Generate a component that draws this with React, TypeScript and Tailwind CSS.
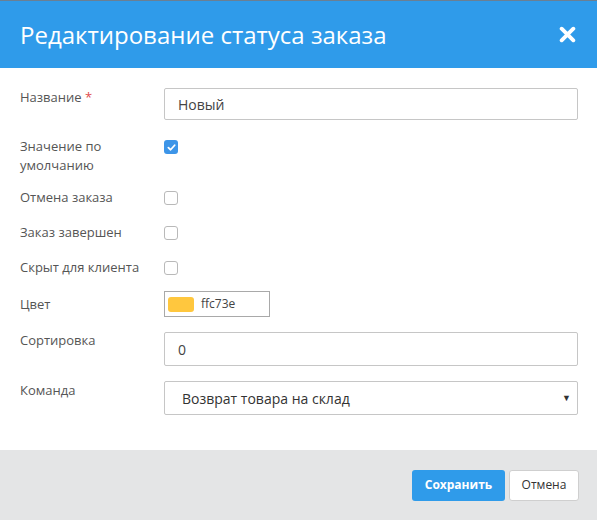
import React from 'react';

const font = { fontFamily: '"Open Sans", "Liberation Sans", sans-serif' };

const Check: React.FC<{ on?: boolean }> = ({ on }) =>
  on ? (
    <span className="flex h-[14px] w-[14px] items-center justify-center rounded-[3px] bg-[#3d95e8]">
      <svg viewBox="0 0 10 10" className="h-[9px] w-[9px]">
        <path d="M1.5 5.2 L4 7.5 L8.5 2.5" fill="none" stroke="#fff" strokeWidth="2" strokeLinecap="round" strokeLinejoin="round" />
      </svg>
    </span>
  ) : (
    <span className="block h-[14px] w-[14px] rounded-[3px] border border-[#b9b9b9] bg-white" />
  );

const Label: React.FC<{ children: React.ReactNode }> = ({ children }) => (
  <div className="w-[144px] shrink-0 text-[13px] leading-[19px] text-[#555]">{children}</div>
);

export default function App() {
  return (
    <div className="flex h-[520px] w-[597px] flex-col bg-white" style={font}>
      <div className="h-px bg-[#6a7f93]" />
      <div className="flex h-[67px] items-center justify-between bg-[#2f9bea] pl-[20px] pr-[21px]">
        <h1 className="text-[24px] leading-none text-white">Редактирование статуса заказа</h1>
        <svg viewBox="0 0 16 16" className="h-[17px] w-[17px]">
          <path d="M2.5 2.5 L13.5 13.5 M13.5 2.5 L2.5 13.5" stroke="#fff" strokeWidth="3.6" strokeLinecap="round" />
        </svg>
      </div>

      <div className="flex-1 pl-[20px] pr-[19px] pt-[20px]">
        <div className="flex">
          <Label>
            Название <span className="text-[#e04b4b]">*</span>
          </Label>
          <div className="flex h-[32px] flex-1 items-center rounded-[2px] border border-[#c6c6c6] px-[13px] text-[14px] text-[#444]">
            Новый
          </div>
        </div>

        <div className="mt-[17px] flex">
          <Label>Значение по<br />умолчанию</Label>
          <div className="pt-[3px]"><Check on /></div>
        </div>

        <div className="mt-[13px] flex">
          <Label>Отмена заказа</Label>
          <div className="pt-[3px]"><Check /></div>
        </div>

        <div className="mt-[16px] flex">
          <Label>Заказ завершен</Label>
          <div className="pt-[3px]"><Check /></div>
        </div>

        <div className="mt-[16px] flex">
          <Label>Скрыт для клиента</Label>
          <div className="pt-[3px]"><Check /></div>
        </div>

        <div className="mt-[14px] flex h-[26px] items-center">
          <Label>Цвет</Label>
          <div className="flex h-[26px] w-[106px] items-center gap-[7px] border border-[#a9a9a9] px-[3px]">
            <span className="block h-[15px] w-[26px] rounded-[3px] bg-[#ffc73e]" />
            <span className="text-[12px] text-[#444]">ffc73e</span>
          </div>
        </div>

        <div className="mt-[15px] flex">
          <Label>
            <div className="-mt-[1px]">Сортировка</div>
          </Label>
          <div className="flex h-[34px] flex-1 items-center rounded-[2px] border border-[#c6c6c6] px-[13px] text-[14px] text-[#444]">
            0
          </div>
        </div>

        <div className="mt-[15px] flex">
          <Label>Команда</Label>
          <div className="flex h-[34px] flex-1 items-center justify-between rounded-[2px] border border-[#c6c6c6] pl-[17px] pr-[6px] text-[14px] text-[#333]">
            <span>Возврат товара на склад</span>
            <span className="text-[9px] text-[#333]">▼</span>
          </div>
        </div>
      </div>

      <div className="flex h-[70px] items-center justify-end gap-[4px] bg-[#e4e5e6] pr-[18px]">
        <button className="h-[31px] w-[93px] rounded-[3px] bg-[#2f9bea] text-[12px] font-bold text-white">Сохранить</button>
        <button className="h-[31px] w-[70px] rounded-[3px] border border-[#cfcfcf] bg-white text-[12px] text-[#333]">Отмена</button>
      </div>
    </div>
  );
}
